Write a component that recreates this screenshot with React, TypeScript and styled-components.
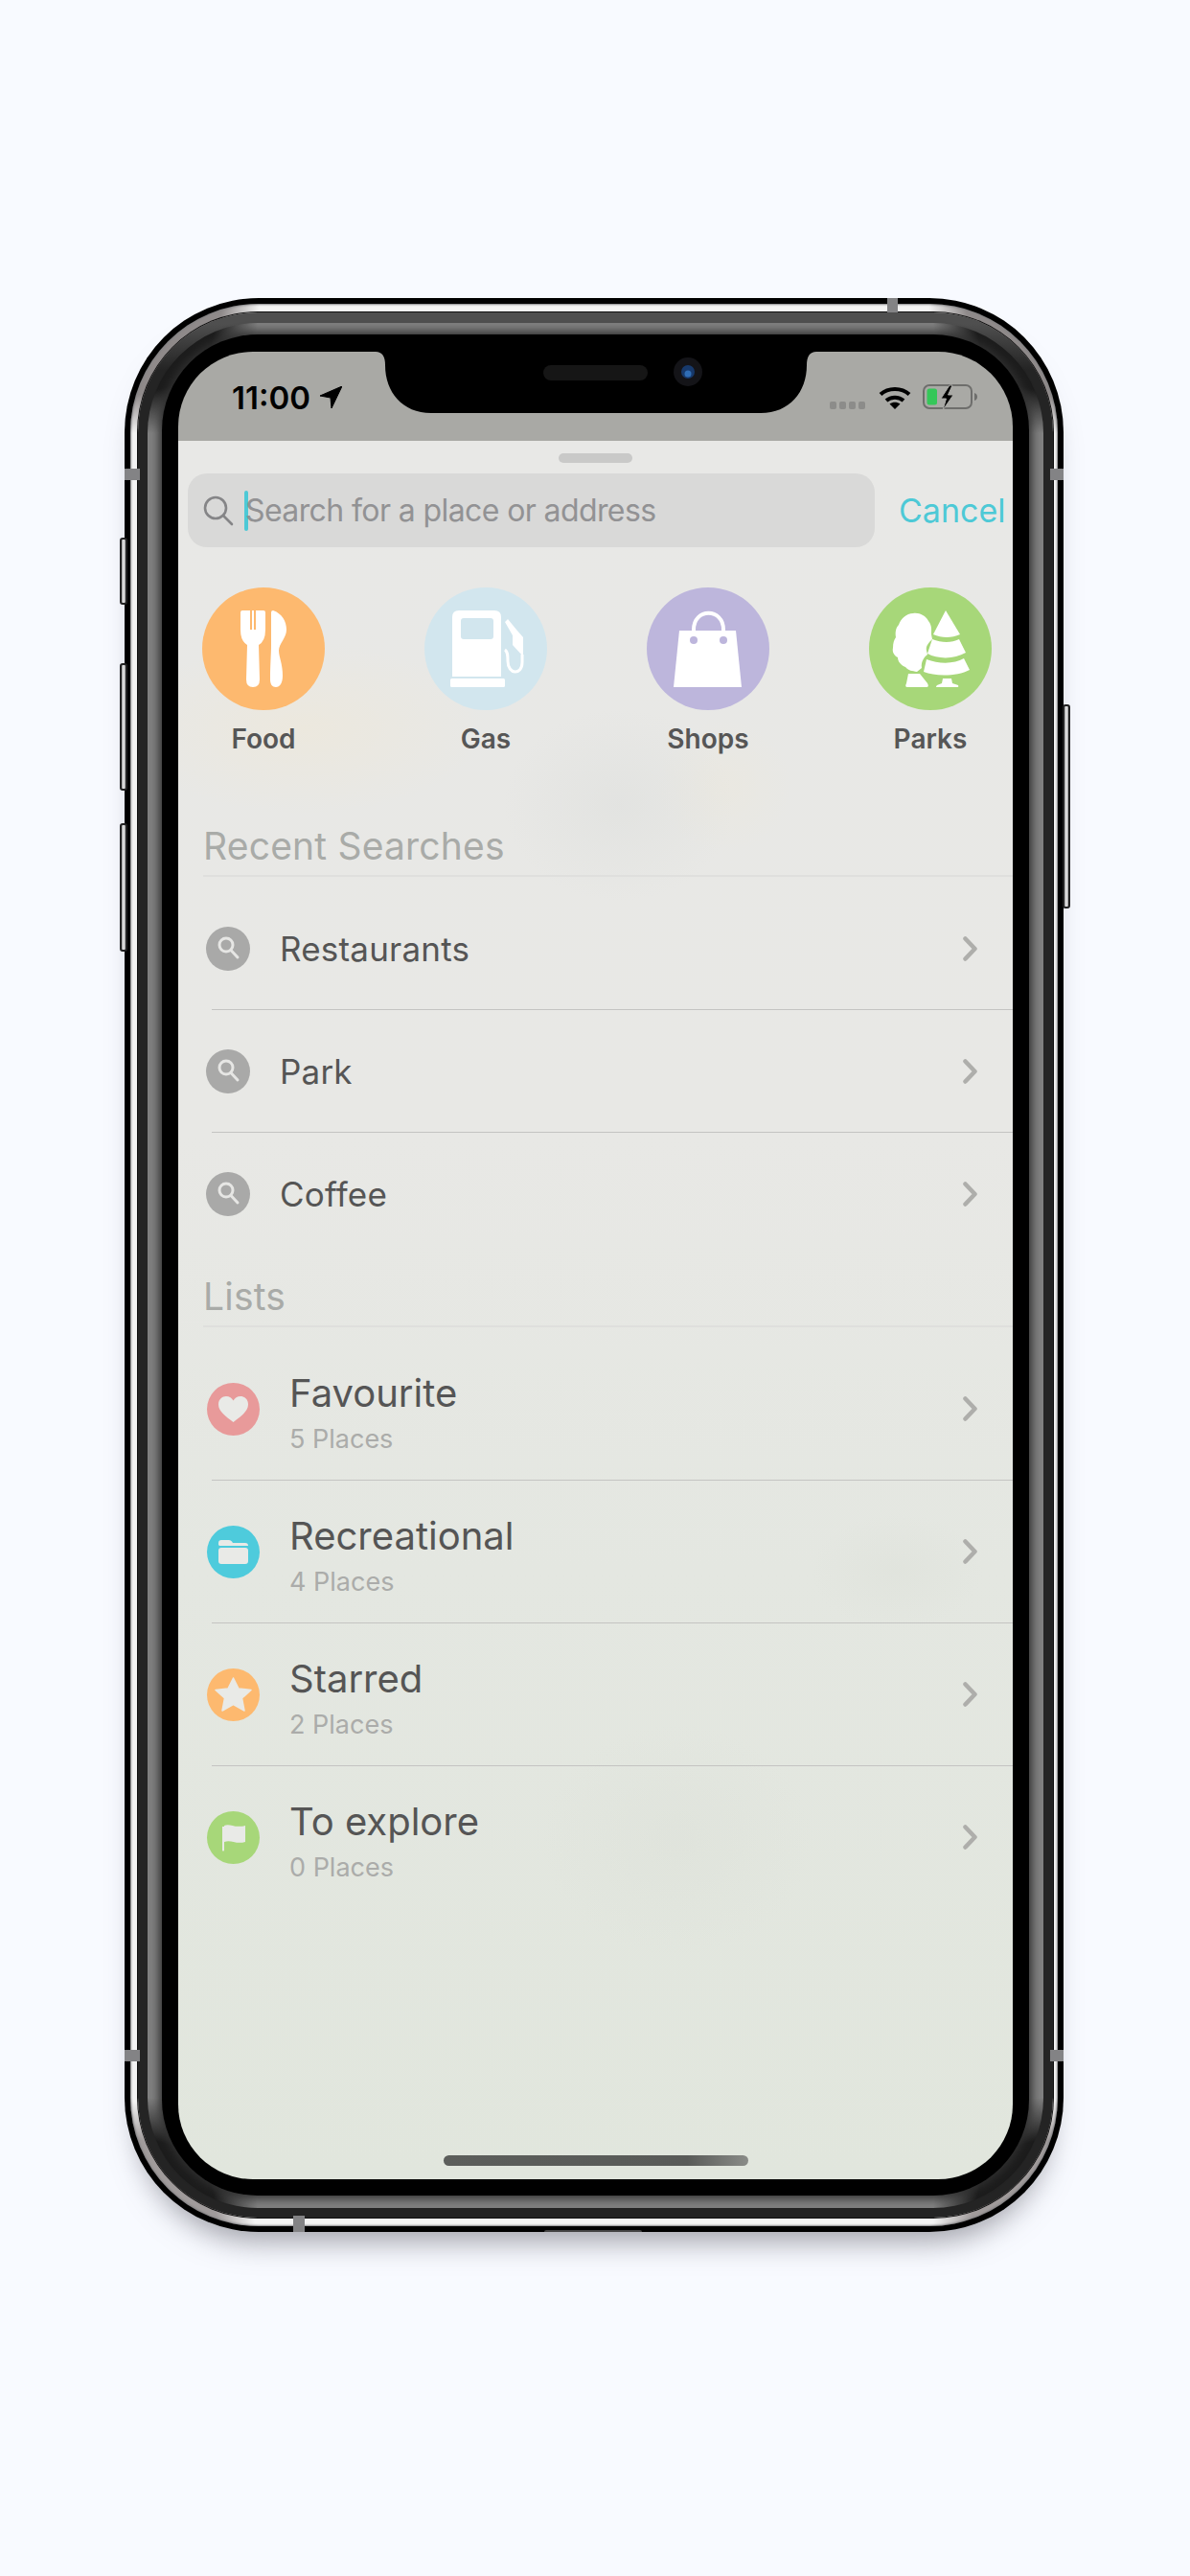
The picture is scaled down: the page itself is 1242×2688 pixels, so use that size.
import styled, { createGlobalStyle } from "styled-components";

const GlobalStyle = createGlobalStyle`
  * { box-sizing: border-box; }
  html, body { margin: 0; padding: 0; background: #f8faff; }
  body { font-family: Inter, "Noto Sans", sans-serif; }
`;

const Styles = {
  Page: styled.div`
    width: 1242px;
    height: 2688px;
    padding: 311px 0 0 130px;
    background: #f8faff;
  `,
  Frame: styled.div`
    position: relative;
    display: flex;
    width: 980px;
    height: 2018px;
    padding: 6px;
    border-radius: 140px;
    background: #000;
    box-shadow: 0 24px 30px -14px rgba(90, 90, 100, 0.55);
  `,
  SilverRing: styled.div`
    flex: 1;
    display: flex;
    padding: 9px 5px 9px 8px;
    border-radius: 134px;
    background:
      radial-gradient(circle at 0 0, #8f8a8a 0 95px, transparent 135px),
      radial-gradient(circle at 100% 0, #8f8a8a 0 95px, transparent 135px),
      radial-gradient(circle at 0 100%, #a09b9b 0 90px, transparent 130px),
      radial-gradient(circle at 100% 100%, #a09b9b 0 90px, transparent 130px),
      #f3f3f3;
    box-shadow: inset 0 0 2px 1px #808083;
  `,
  DarkRing: styled.div`
    flex: 1;
    display: flex;
    padding: 11px 10px 10px 10px;
    border-radius: 125px;
    background: linear-gradient(180deg, #4f4f4f 0, #4f4f4f 12px, #242424 60px);
    box-shadow: 0 0 0 1px #111;
  `,
  GreyRing: styled.div`
    flex: 1;
    display: flex;
    padding: 12px 15px 13px 15px;
    border-radius: 115px;
    background:
      radial-gradient(circle at 0 0, #1c1c1c 0 70px, transparent 115px),
      radial-gradient(circle at 100% 0, #1c1c1c 0 70px, transparent 115px),
      radial-gradient(circle at 0 100%, #1c1c1c 0 70px, transparent 115px),
      radial-gradient(circle at 100% 100%, #1c1c1c 0 70px, transparent 115px),
      #808080;
  `,
  Bezel: styled.div`
    flex: 1;
    display: flex;
    padding: 18px 17px 17px 17px;
    border-radius: 100px;
    background: #000;
    box-shadow: 0 0 10px 3px #303030;
  `,
  Screen: styled.div`
    position: relative;
    flex: 1;
    display: flex;
    flex-direction: column;
    overflow: hidden;
    border-radius: 78px;
  `,
  Band: styled.i<{ $top: number; $left: number; $w: number; $h: number }>`
    position: absolute;
    top: ${(p) => p.$top}px;
    left: ${(p) => p.$left}px;
    width: ${(p) => p.$w}px;
    height: ${(p) => p.$h}px;
    background: #838385;
  `,
  SideButton: styled.i<{ $top: number; $height: number; $right?: boolean }>`
    position: absolute;
    top: ${(p) => p.$top}px;
    ${(p) => (p.$right ? "right: -7px;" : "left: -5px;")}
    width: 8px;
    height: ${(p) => p.$height}px;
    border: 2px solid #222;
    border-radius: 3px;
    background: linear-gradient(90deg, #999, #eee 50%, #999);
  `,
  BottomBump: styled.i`
    position: absolute;
    bottom: 0;
    left: 438px;
    width: 102px;
    height: 2px;
    border-radius: 2px 2px 0 0;
    background: #444;
  `,
  StatusBar: styled.header`
    height: 93px;
    flex-shrink: 0;
    display: flex;
    justify-content: space-between;
    padding: 28px 36px 0 56px;
    background: #a9a9a5;
  `,
  Clock: styled.div`
    display: flex;
    align-items: flex-start;
    gap: 10px;
    font-size: 33px;
    line-height: 40px;
    font-weight: 600;
    color: #000;
    svg { margin-top: 8px; }
  `,
  StatusIcons: styled.div`
    display: flex;
    align-items: flex-start;
    padding-top: 6px;
  `,
  SignalDots: styled.div`
    display: flex;
    gap: 3px;
    margin: 18px 14px 0 0;
    & > i {
      width: 7px;
      height: 8px;
      border-radius: 2px;
      background: #8c8c8a;
    }
  `,
  Notch: styled.svg`
    position: absolute;
    top: 0;
    left: 206px;
  `,
  Sheet: styled.main`
    flex: 1;
    display: flex;
    flex-direction: column;
    padding-top: 13px;
    background:
      radial-gradient(ellipse 120px 100px at 460px 380px, rgba(218, 220, 218, 0.4), transparent),
      radial-gradient(ellipse 190px 90px at 130px 300px, rgba(240, 232, 214, 0.5), transparent),
      radial-gradient(ellipse 70px 70px at 570px 360px, rgba(236, 232, 220, 0.5), transparent),
      radial-gradient(ellipse 90px 60px at 750px 1180px, rgba(218, 222, 214, 0.35), transparent),
      radial-gradient(ellipse 140px 120px at 520px 1460px, rgba(218, 222, 214, 0.35), transparent),
      linear-gradient(180deg, #e8e8e6 0%, #e8e8e5 40%, #e4e7e1 65%, #e1e6dd 100%);
  `,
  Handle: styled.div`
    width: 77px;
    height: 10px;
    margin: 0 auto;
    border-radius: 5px;
    background: #c9c9c8;
  `,
  SearchRow: styled.div`
    display: flex;
    align-items: center;
    margin: 11px 0 0 10px;
  `,
  SearchField: styled.div`
    width: 717px;
    height: 77px;
    flex-shrink: 0;
    display: flex;
    align-items: center;
    padding-left: 16px;
    border-radius: 20px;
    background: #d9d9d8;
  `,
  Caret: styled.i`
    width: 4px;
    height: 42px;
    margin: 0 -3px 0 11px;
    border-radius: 2px;
    background: #4dc9d6;
  `,
  Placeholder: styled.span`
    font-size: 32px;
    letter-spacing: -0.6px;
    color: #929294;
  `,
  Cancel: styled.span`
    margin-left: 25px;
    font-size: 34px;
    color: #4dc9d6;
  `,
  Categories: styled.nav`
    display: flex;
    justify-content: space-between;
    margin-top: 42px;
    padding: 0 22px 0 25px;
  `,
  Category: styled.div`
    width: 128px;
    display: flex;
    flex-direction: column;
    align-items: center;
    gap: 13px;
    font-size: 28px;
    line-height: 34px;
    font-weight: 560;
    color: #565656;
  `,
  CategoryCircle: styled.div<{ $color: string }>`
    width: 128px;
    height: 128px;
    border-radius: 50%;
    background: ${(p) => p.$color};
    svg { display: block; }
  `,
  SectionHeader: styled.h3<{ $top: number }>`
    margin: ${(p) => p.$top}px 0 0 26px;
    padding-bottom: 6px;
    border-bottom: 2px solid #dfdfdd;
    font-size: 39px;
    line-height: 48px;
    font-weight: 400;
    letter-spacing: 0.2px;
    color: #a9aba8;
  `,
  List: styled.ul`
    margin: 11px 0 0 35px;
    padding: 0;
    list-style: none;
  `,
  Row: styled.li<{ $height: number; $offset: number }>`
    height: ${(p) => p.$height}px;
    display: flex;
    align-items: center;
    padding-right: 37px;
    border-bottom: 1px solid #c4c4c2;
    &:last-child { border-bottom-color: transparent; }
    & > :first-child { margin-left: ${(p) => p.$offset}px; }
  `,
  RecentIcon: styled.div`
    width: 46px;
    height: 46px;
    flex-shrink: 0;
    border-radius: 50%;
    background: #a9a9a8;
    svg { display: block; }
  `,
  ListIcon: styled.div<{ $color: string }>`
    width: 55px;
    height: 55px;
    flex-shrink: 0;
    border-radius: 50%;
    background: ${(p) => p.$color};
    svg { display: block; }
  `,
  RecentLabel: styled.span`
    flex: 1;
    margin-left: 31px;
    font-size: 35px;
    font-weight: 420;
    letter-spacing: 0.2px;
    color: #555;
  `,
  ListText: styled.div`
    flex: 1;
    margin-left: 31px;
    padding-top: 9px;
  `,
  ListTitle: styled.div`
    font-size: 40px;
    line-height: 44px;
    font-weight: 420;
    color: #555;
  `,
  ListCount: styled.div`
    margin-top: 10px;
    font-size: 27px;
    line-height: 32px;
    color: #abacaa;
  `,
  HomeBar: styled.div`
    width: 318px;
    height: 11px;
    margin: auto auto 14px;
    border-radius: 6px;
    background: linear-gradient(90deg, #5c5e5b 0%, #595b58 80%, #8a8c88 100%);
  `,
};

const Chevron = () => (
  <svg width="15" height="26" viewBox="0 0 15 26" fill="none">
    <path d="M2.5 2.5 12.5 13 2.5 23.5" stroke="#aeaeab" strokeWidth="4.5" strokeLinecap="round" strokeLinejoin="round" />
  </svg>
);

const SmallSearch = () => (
  <svg width="46" height="46" viewBox="0 0 46 46" fill="none" stroke="#e6e6e4" strokeWidth="3">
    <circle cx="21" cy="19" r="7" />
    <path d="M26 24.5 33 32" strokeLinecap="round" />
  </svg>
);

const FoodIcon = () => (
  <svg width="128" height="128" viewBox="0 0 128 128" fill="#fff">
    <path d="M40 26Q40 24 42 24H50V44H52V24H54V44H56V24H64Q66 24 66 26V44Q66 56 59 60L60 96Q60 104 53 104Q46 104 46 96L47 60Q40 56 40 44Z" />
    <path d="M72 26Q72 24 74 24C83 27 88 35 88 44C88 53 80 58 80 66C80 72 84 80 84 92C84 100 81 104 77 104C73 104 71 101 71 96C71 80 72 70 72 60Z" />
  </svg>
);

const GasIcon = () => (
  <svg width="128" height="128" viewBox="0 0 128 128" fill="#fff">
    <path fillRule="evenodd" d="M36 24H73Q80 24 80 31V93H29V31Q29 24 36 24ZM41 32Q38 32 38 35V51Q38 54 41 54H69Q72 54 72 51V35Q72 32 69 32Z" />
    <rect x="27" y="95" width="57" height="9" rx="1.5" />
    <path d="M84 36 87 33 96 44 103 52V72L92 60V50Z" />
    <path d="M84 65C87 67 87 71 87 77C87 91 102 92 102 78V70" fill="none" stroke="#fff" strokeWidth="3" />
  </svg>
);

const BagIcon = () => (
  <svg width="128" height="128" viewBox="0 0 128 128" fill="none">
    <path d="M34 45H93L99 104H28Z" fill="#fff" />
    <path d="M49 55V44C49 21 80 21 80 44V55" stroke="#fff" strokeWidth="4" />
    <circle cx="49" cy="55" r="4" fill="#bdb6dc" />
    <circle cx="80" cy="55" r="4" fill="#bdb6dc" />
  </svg>
);

const TreesIcon = () => (
  <svg width="128" height="128" viewBox="0 0 128 128" fill="#fff">
    <path d="M46 27C52 26 59 29 62 35C66 40 65 45 65 49L66 54C62 58 59 61 60 66L61 70C57 73 54 78 55 84L50 88C45 87 41 87 38 83C33 81 30 77 30 73C26 71 24 67 25 63C25 58 26 55 28 52C27 47 28 42 31 39C33 33 39 27 46 27Z" />
    <path d="M41 90H53L61 100Q63 104 60 104H40Q37 104 39 100Z" />
    <path d="M80 24 95 49C86 53 76 53 67 49Z" />
    <path d="M66 54C76 58 86 58 94 54L101 68C89 75 72 75 61 69Z" />
    <path d="M60 75C73 80 89 80 99 74L105 86C92 93 69 93 57 88Z" />
    <path d="M77 95H86L87 100 93 102Q94 104 92 104H71Q69 104 71 102L76 100Z" />
  </svg>
);

const HeartIcon = () => (
  <svg width="55" height="55" viewBox="0 0 55 55" fill="#e9eae7">
    <path d="M27.5 41C20 35 12 30 12 22.5C12 17 16 14 20 14C23.5 14 26 16 27.5 18.5C29 16 31.5 14 35 14C39 14 43 17 43 22.5C43 30 35 35 27.5 41Z" />
  </svg>
);

const FolderIcon = () => (
  <svg width="55" height="55" viewBox="0 0 55 55" fill="#e9eae7">
    <path d="M12 20V18Q12 15 15 15H23Q25 15 26 16.5L27 18H40Q43 18 43 21H13Z" />
    <rect x="12" y="23" width="31" height="17" rx="3" />
  </svg>
);

const StarIcon = () => (
  <svg width="55" height="55" viewBox="0 0 55 55" fill="#e9eae7">
    <path d="M27.5 10 33 21 46 22.5 36.5 31 39 44 27.5 37.5 16 44 18.5 31 9 22.5 22 21Z" strokeLinejoin="round" stroke="#e9eae7" strokeWidth="1.5" />
  </svg>
);

const FlagIcon = () => (
  <svg width="55" height="55" viewBox="0 0 55 55" fill="#e9eae7">
    <path d="M16 16H18V41Q17 42 16 41Z" />
    <path d="M18 15C24 12 28 18 40 15V32C30 35 25 29 18 32Z" />
  </svg>
);

const categories = [
  { label: "Food", color: "#fdb96f", Icon: FoodIcon },
  { label: "Gas", color: "#d2e6ee", Icon: GasIcon },
  { label: "Shops", color: "#bdb6dc", Icon: BagIcon },
  { label: "Parks", color: "#a7d779", Icon: TreesIcon },
];

const recents = ["Restaurants", "Park", "Coffee"];

const lists = [
  { title: "Favourite", count: "5 Places", color: "#e89a9a", Icon: HeartIcon },
  { title: "Recreational", count: "4 Places", color: "#4ecbdc", Icon: FolderIcon },
  { title: "Starred", count: "2 Places", color: "#fdb96f", Icon: StarIcon },
  { title: "To explore", count: "0 Places", color: "#a7d779", Icon: FlagIcon },
];

export default function App() {
  return (
    <Styles.Page>
      <GlobalStyle />
      <Styles.Frame>
        <Styles.SideButton $top={250} $height={70} />
        <Styles.SideButton $top={381} $height={133} />
        <Styles.SideButton $top={548} $height={134} />
        <Styles.SideButton $top={424} $height={213} $right />
        <Styles.SilverRing>
          <Styles.DarkRing>
            <Styles.GreyRing>
              <Styles.Bezel>
                <Styles.Screen>
                  <Styles.StatusBar>
                    <Styles.Clock>
                      11:00
                      <svg width="23" height="23" viewBox="0 0 23 23" fill="#000">
                        <path d="M23 0 0 10 11 12 12 23Z" strokeLinejoin="round" stroke="#000" strokeWidth="1" />
                      </svg>
                    </Styles.Clock>
                    <Styles.StatusIcons>
                      <Styles.SignalDots>
                        <i />
                        <i />
                        <i />
                        <i />
                      </Styles.SignalDots>
                      <svg width="34" height="27" viewBox="0 0 34 27" fill="none" stroke="#000" strokeWidth="4">
                        <path d="M2 10.5C10 3 24 3 32 10.5" />
                        <path d="M8 17C13 12.5 21 12.5 26 17" />
                        <path d="M11.5 20.5 17 26 22.5 20.5C19 18 15 18 11.5 20.5Z" fill="#000" stroke="none" />
                      </svg>
                      <svg width="58" height="27" viewBox="0 0 58 27" fill="none" style={{ marginLeft: 12 }}>
                        <rect x="1" y="1" width="50" height="24" rx="6" stroke="#6e6e6c" strokeWidth="2" />
                        <rect x="4.5" y="4.5" width="10.5" height="17" rx="2.5" fill="#35c759" />
                        <path d="M54 9Q57 10 57 13Q57 16 54 17Z" fill="#6e6e6c" />
                        <path d="M28 1 19 15H24.5L21 27 32 11H26.5L31 1Z" fill="#000" stroke="#a9a9a5" strokeWidth="1" />
                      </svg>
                    </Styles.StatusIcons>
                  </Styles.StatusBar>
                  <Styles.Notch width="460" height="64" viewBox="0 0 460 64">
                    <path d="M0 0H460Q450 0 450 14C450 42 432 64 402 64H58C28 64 10 42 10 14Q10 0 0 0Z" fill="#000" />
                    <rect x="175" y="14" width="109" height="16" rx="8" fill="#161616" />
                    <circle cx="326" cy="21" r="15" fill="#141418" />
                    <circle cx="326" cy="21" r="7" fill="#17396b" />
                    <circle cx="326" cy="23" r="3.5" fill="#2f6db5" />
                  </Styles.Notch>
                  <Styles.Sheet>
                    <Styles.Handle />
                    <Styles.SearchRow>
                      <Styles.SearchField>
                        <svg width="32" height="32" viewBox="0 0 32 32" fill="none" stroke="#858587" strokeWidth="2.6">
                          <circle cx="13" cy="13" r="11" />
                          <path d="M21 21 30 30" strokeLinecap="round" />
                        </svg>
                        <Styles.Caret />
                        <Styles.Placeholder>Search for a place or address</Styles.Placeholder>
                      </Styles.SearchField>
                      <Styles.Cancel>Cancel</Styles.Cancel>
                    </Styles.SearchRow>
                    <Styles.Categories>
                      {categories.map(({ label, color, Icon }) => (
                        <Styles.Category key={label}>
                          <Styles.CategoryCircle $color={color}>
                            <Icon />
                          </Styles.CategoryCircle>
                          {label}
                        </Styles.Category>
                      ))}
                    </Styles.Categories>
                    <Styles.SectionHeader $top={71}>Recent Searches</Styles.SectionHeader>
                    <Styles.List>
                      {recents.map((name) => (
                        <Styles.Row key={name} $height={128} $offset={-6}>
                          <Styles.RecentIcon>
                            <SmallSearch />
                          </Styles.RecentIcon>
                          <Styles.RecentLabel>{name}</Styles.RecentLabel>
                          <Chevron />
                        </Styles.Row>
                      ))}
                    </Styles.List>
                    <Styles.SectionHeader $top={19}>Lists</Styles.SectionHeader>
                    <Styles.List>
                      {lists.map(({ title, count, color, Icon }) => (
                        <Styles.Row key={title} $height={149} $offset={-5}>
                          <Styles.ListIcon $color={color}>
                            <Icon />
                          </Styles.ListIcon>
                          <Styles.ListText>
                            <Styles.ListTitle>{title}</Styles.ListTitle>
                            <Styles.ListCount>{count}</Styles.ListCount>
                          </Styles.ListText>
                          <Chevron />
                        </Styles.Row>
                      ))}
                    </Styles.List>
                    <Styles.HomeBar />
                  </Styles.Sheet>
                </Styles.Screen>
              </Styles.Bezel>
            </Styles.GreyRing>
          </Styles.DarkRing>
        </Styles.SilverRing>
        <Styles.Band $top={0} $left={796} $w={11} $h={15} />
        <Styles.Band $top={178} $left={0} $w={16} $h={12} />
        <Styles.Band $top={178} $left={966} $w={14} $h={12} />
        <Styles.Band $top={1828} $left={0} $w={16} $h={12} />
        <Styles.Band $top={1828} $left={966} $w={14} $h={12} />
        <Styles.Band $top={2001} $left={176} $w={12} $h={17} />
        <Styles.BottomBump />
      </Styles.Frame>
    </Styles.Page>
  );
}
